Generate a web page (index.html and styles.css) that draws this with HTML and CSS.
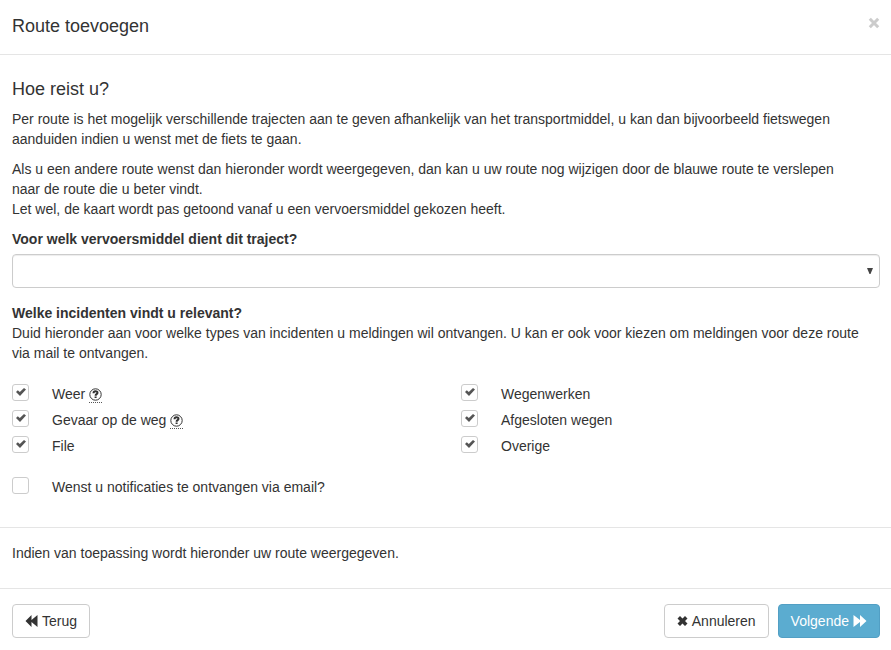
FILE: index.html
```html
<!DOCTYPE html>
<html lang="nl">
<head>
<meta charset="utf-8">
<meta name="viewport" content="width=device-width, initial-scale=1">
<title>Route toevoegen</title>
<link rel="stylesheet" href="styles.css">
</head>
<body>
<form class="modal">
  <header class="modal-header">
    <h1 class="title">Route toevoegen</h1>
    <button type="button" class="close" aria-label="Sluiten"><svg width="12" height="12" viewBox="0 0 12 12" aria-hidden="true"><path d="M1.800 1.800l8.400 8.400M10.200 1.800l-8.400 8.400"/></svg></button>
  </header>
  <main class="modal-body">
    <h2 class="title section-title">Hoe reist u?</h2>
    <p>Per route is het mogelijk verschillende trajecten aan te geven afhankelijk van het transportmiddel, u kan dan bijvoorbeeld fietswegen aanduiden indien u wenst met de fiets te gaan.</p>
    <p>Als u een andere route wenst dan hieronder wordt weergegeven, dan kan u uw route nog wijzigen door de blauwe route te verslepen naar&nbsp;de route die u beter vindt.<br>Let wel, de kaart wordt pas getoond vanaf u een vervoersmiddel gekozen heeft.</p>
    <div class="field">
      <label class="label" for="vervoer">Voor welk vervoersmiddel dient dit traject?</label>
      <div class="select-wrap">
        <select id="vervoer" class="select"><option></option></select>
        <svg class="arrow" width="6" height="6" viewBox="0 0 6 6" aria-hidden="true"><path d="M0 0h6L3.500 6h-1z"/></svg>
      </div>
    </div>
    <fieldset class="incidents">
      <legend class="label">Welke incidenten vindt u relevant?</legend>
      <p class="help">Duid hieronder aan voor welke types van incidenten u meldingen wil ontvangen. U kan er ook voor kiezen om meldingen voor deze route via mail te ontvangen.</p>
      <div class="checks">
        <div class="check"><input type="checkbox" id="weer" checked><label for="weer">Weer</label><span class="hint"><svg width="13" height="13" viewBox="0 0 13 13" aria-hidden="true"><circle cx="6.5" cy="6.5" r="5.700"/><path d="M4.500 5.200C4.500 2.700 8.500 2.800 8.500 4.800C8.500 6.200 6.600 6.100 6.600 7.700M6.600 8.600v1.500"/></svg></span></div>
        <div class="check"><input type="checkbox" id="werken" checked><label for="werken">Wegenwerken</label></div>
        <div class="check"><input type="checkbox" id="gevaar" checked><label for="gevaar">Gevaar op de weg</label><span class="hint"><svg width="13" height="13" viewBox="0 0 13 13" aria-hidden="true"><circle cx="6.5" cy="6.5" r="5.700"/><path d="M4.500 5.200C4.500 2.700 8.500 2.800 8.500 4.800C8.500 6.200 6.600 6.100 6.600 7.700M6.600 8.600v1.500"/></svg></span></div>
        <div class="check"><input type="checkbox" id="afgesloten" checked><label for="afgesloten">Afgesloten wegen</label></div>
        <div class="check"><input type="checkbox" id="file" checked><label for="file">File</label></div>
        <div class="check"><input type="checkbox" id="overige" checked><label for="overige">Overige</label></div>
      </div>
    </fieldset>
    <div class="check email"><input type="checkbox" id="email"><label for="email">Wenst u notificaties te ontvangen via email?</label></div>
  </main>
  <section class="route-note"><p>Indien van toepassing wordt hieronder uw route weergegeven.</p></section>
  <footer class="modal-footer">
    <button type="button" class="btn back"><svg width="13" height="12" viewBox="0 0 13 12" aria-hidden="true"><path d="M.5 6L6.500 0v5L12.500 0v12L6.500 7v5z"/></svg>Terug</button>
    <button type="button" class="btn"><svg width="11" height="12" viewBox="0 0 11 12" aria-hidden="true"><path d="M3 1L5.500 3.500 8 1l2.500 2.500L8 6l2.500 2.500L8 11 5.500 8.500 3 11 .5 8.500 3 6 .5 3.500z"/></svg>Annuleren</button>
    <button type="submit" class="btn primary">Volgende<svg width="14" height="12" viewBox="0 0 14 12" aria-hidden="true"><path d="M13.500 6L7 0v5L.5 0v12L7 7v5z"/></svg></button>
  </footer>
</form>
</body>
</html>
```
FILE: styles.css
```css
* { box-sizing: border-box; }
body {
  margin: 0;
  background: #fff;
  color: #333;
  font: 14px/20px "Liberation Sans", Arial, sans-serif;
}
p { margin: 0 0 10px; }
.modal-header {
  display: flex;
  justify-content: space-between;
  align-items: flex-start;
  padding: 14px 11px 16px 12px;
  border-bottom: 1px solid #e5e5e5;
}
.title {
  margin: 0;
  font-size: 18px;
  line-height: 24px;
  font-weight: 400;
}
.section-title { line-height: 20px; margin-bottom: 10px; }
.close {
  display: flex;
  padding: 3px 0;
  border: 0;
  background: none;
}
.close svg { fill: none; stroke: #ccc; stroke-width: 3; }
.modal-body { padding: 24px 11px 30px 12px; }
.field { margin-bottom: 15px; }
.label {
  display: block;
  padding: 0;
  font-weight: 700;
}
.field .label { margin-bottom: 5px; }
.select-wrap { position: relative; }
.select {
  display: block;
  width: 100%;
  height: 34px;
  padding: 6px 12px;
  border: 1px solid #ccc;
  border-radius: 4px;
  background: #fff;
  appearance: none;
  font: inherit;
  box-shadow: inset 0 1px 1px rgba(0, 0, 0, .075);
}
.arrow {
  position: absolute;
  right: 7px;
  top: 14px;
  fill: #444;
  pointer-events: none;
}
.incidents { margin: 0; padding: 0; border: 0; min-width: 0; }
.help { margin-bottom: 21px; }
.checks {
  display: grid;
  grid-template-columns: 1fr 1fr;
  column-gap: 30px;
  row-gap: 6px;
}
.check { display: flex; align-items: flex-start; height: 20px; }
.check input {
  flex: none;
  width: 17px;
  height: 17px;
  margin: 0 23px 0 0;
  border: 1px solid #ccc;
  border-radius: 3px;
  background: #fff;
  appearance: none;
}
.check input:checked::before {
  content: "";
  display: block;
  width: 10px;
  height: 8px;
  margin: 3px;
  background: #555;
  clip-path: polygon(0 50%, 18% 28%, 38% 50%, 80% 0, 100% 20%, 40% 100%);
}
.hint {
  display: flex;
  margin: 4px 0 0 4px;
  height: 15px;
  border-bottom: 1px dotted #555;
}
.hint svg { fill: none; stroke: #333; stroke-width: 1; }
.hint path { stroke-width: 2; }
.email { margin-top: 21px; }
.route-note {
  padding: 15px 12px;
  border-top: 1px solid #e5e5e5;
}
.modal-footer {
  display: flex;
  gap: 9px;
  padding: 15px 11px 12px 12px;
  border-top: 1px solid #e5e5e5;
}
.btn {
  display: flex;
  align-items: center;
  gap: 4px;
  height: 34px;
  padding: 0 12px;
  border: 1px solid #ccc;
  border-radius: 4px;
  background: #fff;
  color: #333;
  font: inherit;
}
.btn svg { fill: currentColor; }
.back { margin-right: auto; }
.primary {
  border-color: #529fc4;
  background: #5bacd0;
  color: #fff;
}
```
